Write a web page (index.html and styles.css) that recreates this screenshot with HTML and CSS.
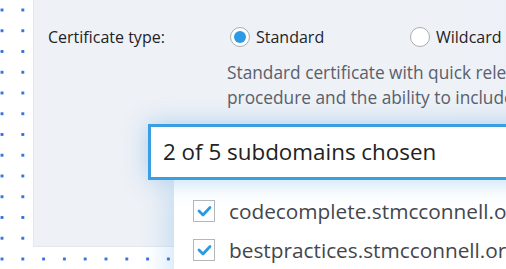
FILE: index.html
```html
<!DOCTYPE html>
<html lang="en">
<head>
    <meta charset="UTF-8">
    <title>Certificate type</title>
    <link rel="stylesheet" href="styles.css">
</head>
<body>
    <div class="panel">
        <div class="type-row">
            <span class="label">Certificate type:</span>
            <label class="option">
                <span class="radio checked"></span>
                <span>Standard</span>
            </label>
            <label class="option">
                <span class="radio"></span>
                <span>Wildcard</span>
            </label>
        </div>
        <p class="desc">Standard certificate with quick release<br>procedure and the ability to include subdomains</p>
        <div class="select">2 of 5 subdomains chosen</div>
    </div>

    <div class="dropdown">
        <div class="item">
            <span class="check">
                <svg width="15" height="12" viewBox="0 0 15 12"><path d="M2 6 L6 10 L13 2.5" fill="none" stroke="#2a9ae3" stroke-width="2.8" stroke-linecap="round" stroke-linejoin="round"/></svg>
            </span>
            <span>codecomplete.stmcconnell.org</span>
        </div>
        <div class="item">
            <span class="check">
                <svg width="15" height="12" viewBox="0 0 15 12"><path d="M2 6 L6 10 L13 2.5" fill="none" stroke="#2a9ae3" stroke-width="2.8" stroke-linecap="round" stroke-linejoin="round"/></svg>
            </span>
            <span>bestpractices.stmcconnell.org</span>
        </div>
    </div>
</body>
</html>
```

FILE: styles.css
```css
html, body {
    margin: 0;
    height: 100%;
    overflow: hidden;
}
body {
    font-family: "Open Sans", "Noto Sans", sans-serif;
    background-color: #fff;
    background-image: radial-gradient(circle, #2e6fe0 1.3px, transparent 1.9px);
    background-size: 20.8px 20.75px;
    background-position: -8.4px -0.4px;
    position: relative;
}
.panel {
    margin-left: 33px;
    width: 700px;
    height: 247px;
    background: linear-gradient(90deg, #eef1f6 60%, #e9eef6);
    border-left: 1px solid #e4e8ee;
    border-bottom: 1px solid #e4e8ee;
    box-sizing: border-box;
    padding: 25px 0 0 14px;
}
.type-row {
    display: flex;
    align-items: center;
    height: 24px;
    font-size: 16px;
    color: #1f2226;
}
.label { width: 182px; }
.option {
    display: flex;
    align-items: center;
    gap: 6px;
    width: 180px;
}
.radio {
    width: 20px;
    height: 20px;
    border: 1px solid #a9adb3;
    border-radius: 50%;
    background: #fff;
    box-sizing: border-box;
    position: relative;
}
.radio.checked::after {
    content: "";
    position: absolute;
    left: 3px;
    top: 3px;
    width: 12px;
    height: 12px;
    border-radius: 50%;
    background: #2c9be4;
}
.desc {
    margin: 11px 0 0 179px;
    height: 50px;
    font-size: 17.3px;
    line-height: 25px;
    color: #59606b;
    white-space: nowrap;
}
.select {
    margin: 14px 0 0 100px;
    width: 500px;
    height: 56px;
    box-sizing: border-box;
    border: 3px solid #3a9fe0;
    background: #fff;
    padding-left: 12px;
    font-size: 22.4px;
    line-height: 50px;
    color: #222;
    box-shadow: 0 0 24px rgba(60, 150, 230, 0.38);
    position: relative;
    z-index: 2;
}
.dropdown {
    position: absolute;
    left: 174px;
    top: 180px;
    width: 500px;
    height: 120px;
    background: #fff;
    box-shadow: -6px 6px 26px rgba(60, 150, 230, 0.24);
    padding: 20px 0 0 19px;
    box-sizing: border-box;
    z-index: 1;
}
.item {
    display: flex;
    align-items: center;
    gap: 14px;
    height: 22px;
    margin-bottom: 17px;
    font-size: 20.8px;
    color: #43474d;
    white-space: nowrap;
}
.check {
    width: 22px;
    height: 22px;
    border: 1.5px solid #b3b7bc;
    box-sizing: border-box;
    display: flex;
    align-items: center;
    justify-content: center;
    flex: none;
}
```
